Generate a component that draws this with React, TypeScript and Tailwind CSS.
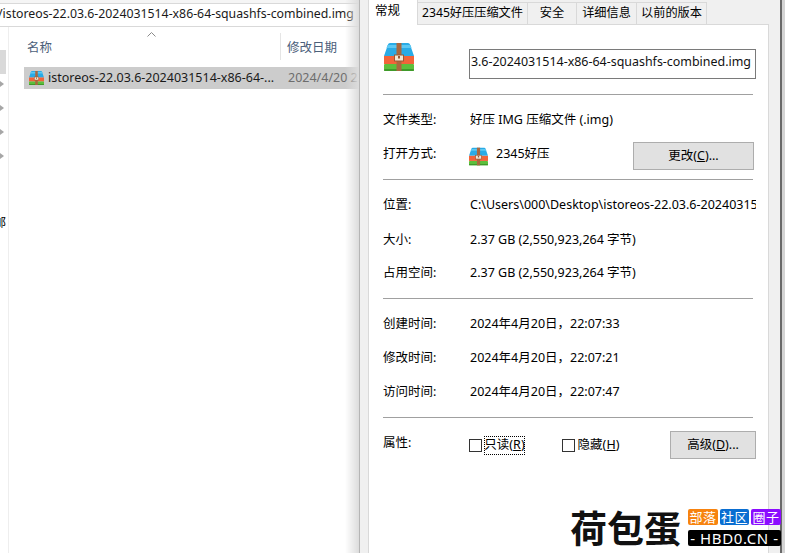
const FONT = "font-['Noto_Sans','Noto_Sans_CJK_SC',sans-serif]";

function ArchiveIcon({ className }: { className: string }) {
  return (
    <svg viewBox="0 0 30 28" className={className}>
      <path d="M4 1.5Q4.300 0 6 0H24Q25.700 0 26 1.500L30 13H0Z" fill="#29abe6" />
      <path d="M3.500 2H26.500L27.500 5H2.500Z" fill="#5cc8f2" />
      <rect x="0" y="13" width="30" height="8" fill="#f2643a" />
      <rect x="0" y="21" width="30" height="7" rx="1" fill="#5cbf3c" />
      <rect x="0" y="26" width="30" height="2" rx="1" fill="#3f9a2a" />
      <rect x="12.500" y="0" width="5" height="28" fill="#a9683f" />
      <rect x="10.500" y="12" width="9" height="6" fill="#f3e6d4" stroke="#9a5a35" strokeWidth="1" />
      <rect x="14" y="13" width="2" height="2.500" fill="#9a5a35" />
    </svg>
  );
}

function Tab({ label, w, active }: { label: string; w: string; active?: boolean }) {
  return active ? (
    <div className={`${w} h-[25px] -mb-px relative z-10 bg-white border-l border-r border-[#d9d9d9] pl-[6px] pt-[2px] text-[12.500px] leading-[18px] text-black`}>
      {label}
    </div>
  ) : (
    <div className={`${w} h-[22px] mt-[2px] bg-[#f0f0f0] border-t border-r border-[#d9d9d9] flex items-center justify-center text-[12.200px] text-black`}>
      {label}
    </div>
  );
}

function Hr({ className }: { className: string }) {
  return <div className={`h-px bg-[#a0a0a0] w-[370px] ${className}`} />;
}

function Row({ label, className, children }: { label: string; className: string; children: React.ReactNode }) {
  return (
    <div className={`flex items-center h-[20px] ${className}`}>
      <div className="w-[87px] shrink-0">{label}</div>
      <div className="whitespace-nowrap overflow-hidden w-[286px]">{children}</div>
    </div>
  );
}

function Btn({ className, children }: { className: string; children: React.ReactNode }) {
  return (
    <div className={`bg-[#e1e1e1] border border-[#adadad] flex items-center justify-center text-black ${className}`}>
      {children}
    </div>
  );
}

function Chevron({ className }: { className: string }) {
  return <div className={`w-0 h-0 border-y-[3px] border-y-transparent border-l-[4px] border-l-[#a6a6a6] ${className}`} />;
}

export default function App() {
  return (
    <div className={`relative w-[785px] h-[553px] overflow-hidden flex bg-white text-[12.500px] text-[#111] ${FONT}`}>
      {/* Explorer */}
      <div className="relative w-[359px] shrink-0 h-full overflow-hidden flex flex-col">
        <div className="h-[4px] bg-[#f5f5f5] border-b border-[#d9d9d9]" />
        <div className="h-[23px] border-b border-[#d9d9d9] flex items-center overflow-hidden pb-[2px]">
          <span className="whitespace-nowrap text-[12.300px] text-[#1a1a1a] -ml-[2px]">/istoreos-22.03.6-2024031514-x86-64-squashfs-combined.img</span>
        </div>
        <div className="flex flex-1">
          <div className="w-[9px] shrink-0 border-r border-[#eeeeee] flex flex-col overflow-hidden">
            <div className="h-[24px] mt-[23px] w-[6px] bg-[#d9d9d9]" />
            <Chevron className="mt-[7px]" />
            <Chevron className="mt-[18px]" />
            <Chevron className="mt-[18px]" />
            <Chevron className="mt-[18px]" />
            <div className="mt-[56px] w-[6px] overflow-hidden flex justify-end text-[12px] leading-[16px] text-black">
              <span className="shrink-0">邮</span>
            </div>
          </div>
          <div className="flex-1 pl-[15px] relative">
            <div className="h-[33px] pt-[6px] flex text-[12.500px] text-[#4c607a]">
              <div className="w-[257px] h-[27px] border-r border-[#e5e5e5] pl-[3px] flex items-center pt-[3px]">名称</div>
              <div className="pl-[6px] h-[27px] flex items-center whitespace-nowrap pt-[3px]">修改日期</div>
            </div>
            <svg viewBox="0 0 9 5" className="absolute left-[138px] top-[5px] w-[9px] h-[5px]">
              <path d="M.5 4.500L4.500 .5L8.500 4.500" fill="none" stroke="#8a8a8a" strokeWidth="1" />
            </svg>
            <div className="h-[22px] mt-[7px] bg-[#cccccc] flex items-center whitespace-nowrap overflow-hidden">
              <ArchiveIcon className="w-[15px] h-[14px] ml-[5px] shrink-0" />
              <span className="ml-[4px] w-[240px] shrink-0 text-[12.500px] text-[#1a1a1a]">istoreos-22.03.6-2024031514-x86-64-...</span>
              <span className="text-[12.500px] text-[#6d6d6d]">2024/4/20 22:07</span>
            </div>
          </div>
        </div>
        <div className="absolute right-0 top-0 bottom-0 w-[14px] bg-linear-to-r from-transparent to-[#dcdcdc]" />
      </div>

      {/* Dialog */}
      <div className="w-[426px] shrink-0 h-full flex bg-[#f0f0f0] border-l border-[#b5b5b5]">
        <div className="ml-[8px] w-[401px] flex flex-col shrink-0">
          <div className="flex h-[24px] shrink-0">
            <Tab label="常规" w="w-[50px]" active />
            <Tab label="2345好压压缩文件" w="w-[110px]" />
            <Tab label="安全" w="w-[49px]" />
            <Tab label="详细信息" w="w-[60px]" />
            <Tab label="以前的版本" w="w-[70px]" />
          </div>
          <div className="flex-1 bg-white border-l border-t border-r border-[#d9d9d9] pl-[14px] text-black">
            <div className="flex h-[69px]">
              <ArchiveIcon className="w-[30px] h-[28px] mt-[18px] ml-px shrink-0" />
              <div className="ml-[55px] mt-[24px] w-[287px] h-[30px] border border-[#7a7a7a] overflow-hidden flex items-center justify-end pr-[4px] pb-[3px]">
                <span className="whitespace-nowrap text-[12.450px] text-[#111]">3.6-2024031514-x86-64-squashfs-combined.img</span>
              </div>
            </div>
            <Hr className="" />
            <Row label="文件类型:" className="mt-[15px]">好压 IMG 压缩文件 (.img)</Row>
            <div className="flex items-center h-[28px] mt-[12px]">
              <div className="w-[86px] shrink-0 -mt-[4px] pl-0">打开方式:</div>
              <ArchiveIcon className="w-[19px] h-[19px] shrink-0" />
              <span className="ml-[8px] w-[137px] shrink-0 -mt-[4px]">2345好压</span>
              <Btn className="w-[121px] h-[28px]">更改(<u>C</u>)...</Btn>
            </div>
            <Hr className="mt-[9px]" />
            <Row label="位置:" className="mt-[15px]">C:\Users\000\Desktop\istoreos-22.03.6-20240315</Row>
            <Row label="大小:" className="mt-[15px]">2.37 GB (2,550,923,264 字节)</Row>
            <Row label="占用空间:" className="mt-[13px]">2.37 GB (2,550,923,264 字节)</Row>
            <Hr className="mt-[15px]" />
            <Row label="创建时间:" className="mt-[15px]">2024年4月20日，22:07:33</Row>
            <Row label="修改时间:" className="mt-[14px]">2024年4月20日，22:07:21</Row>
            <Row label="访问时间:" className="mt-[14px]">2024年4月20日，22:07:47</Row>
            <Hr className="mt-[15px]" />
            <div className="flex mt-[13px] h-[28px]">
              <div className="w-[86px] shrink-0 mt-[2px] leading-[20px]">属性:</div>
              <div className="w-[13px] h-[13px] border border-[#333] mt-[8px] shrink-0" />
              <div className="ml-[2px] mt-[5px] w-[41px] h-[19px] border border-dotted border-black flex items-center justify-center whitespace-nowrap shrink-0 text-[12.500px]">只读(<u>R</u>)</div>
              <div className="w-[13px] h-[13px] border border-[#333] mt-[8px] ml-[37px] shrink-0" />
              <div className="ml-[3px] mt-[5px] w-[41px] h-[19px] flex items-center justify-center whitespace-nowrap shrink-0">隐藏(<u>H</u>)</div>
              <Btn className="w-[86px] h-[28px] ml-[51px] shrink-0">高级(<u>D</u>)...</Btn>
            </div>
          </div>
        </div>
        <div className="ml-[11px] w-[2px] bg-[#696969] shrink-0" />
        <div className="flex-1 bg-[#d4d4d4]" />
      </div>

      {/* Watermark */}
      <div className="absolute left-[570px] top-[507px] flex gap-[5px]">
        <div className="w-[113px] h-[40px] text-[37px] leading-[40px] font-bold text-[#111] font-['Noto_Sans_CJK_SC',sans-serif] whitespace-nowrap">荷包蛋</div>
        <div className="flex flex-col w-[93px] mt-[2px]">
          <div className="flex justify-between text-[13px] leading-[16px] tracking-[0.5px] text-white text-center font-['Noto_Sans_CJK_SC',sans-serif]">
            <div className="w-[30px] h-[16px] rounded-[2px] bg-[#f7830f]">部落</div>
            <div className="w-[29px] h-[16px] rounded-[2px] bg-[#0a6ed1]">社区</div>
            <div className="w-[30px] h-[16px] rounded-[2px] bg-[#8b0cff]">圈子</div>
          </div>
          <div className="mt-[5px] h-[16px] rounded-[2px] bg-black text-white text-[15px] leading-[16px] text-center whitespace-nowrap tracking-[0.6px]">- HBD0.CN -</div>
        </div>
      </div>
    </div>
  );
}
